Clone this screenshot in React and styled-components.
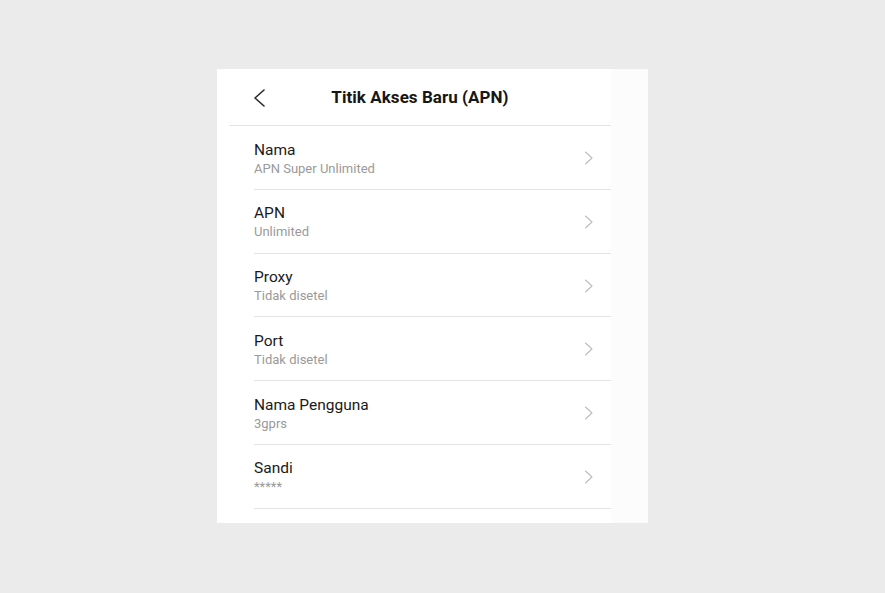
import React from "react";
import styled, { createGlobalStyle } from "styled-components";

const Global = createGlobalStyle`
  html, body { margin: 0; padding: 0; background: #ebebeb; }
  body { font-family: Roboto, "Noto Sans", "Liberation Sans", sans-serif; }
`;

const Page = styled.div`
  width: 885px;
  height: 593px;
  padding: 69px 0 0 217px;
  box-sizing: border-box;
`;

const Card = styled.div`
  width: 431px;
  height: 454px;
  background: #ffffff;
  display: flex;
`;

const Screen = styled.div`
  width: 394px;
  display: flex;
  flex-direction: column;
`;

const SideStrip = styled.div`
  flex: 1;
  background: #fcfcfc;
`;

const Header = styled.header`
  margin-left: 12px;
  height: 56px;
  border-bottom: 1px solid #e3e3e3;
  display: grid;
  grid-template-columns: 1fr auto 1fr;
  align-items: center;
`;

const BackButton = styled.button`
  justify-self: start;
  margin-left: 23px;
  margin-top: 2px;
  padding: 0;
  border: 0;
  background: none;
  width: 14px;
  height: 20px;
  display: flex;
  align-items: center;
  justify-content: center;
`;

const Title = styled.h1`
  margin: 0;
  font-size: 17px;
  font-weight: 700;
  color: #161616;
  letter-spacing: 0.05px;
`;

const List = styled.div`
  margin-left: 37px;
  display: flex;
  flex-direction: column;
`;

const Row = styled.div`
  display: flex;
  align-items: center;
  padding: 13.5px 0 12.3px;
  border-bottom: 1px solid #e3e3e3;
`;

const Texts = styled.div`
  flex: 1;
  display: flex;
  flex-direction: column;
`;

const Label = styled.div`
  font-size: 15.5px;
  line-height: 20px;
  color: #1a1a1a;
`;

const Value = styled.div`
  font-size: 13px;
  line-height: 17px;
  color: #9a9a9a;
`;

const Chevron = styled.svg`
  margin-right: 18px;
  flex: none;
`;

const rows = [
  ["Nama", "APN Super Unlimited"],
  ["APN", "Unlimited"],
  ["Proxy", "Tidak disetel"],
  ["Port", "Tidak disetel"],
  ["Nama Pengguna", "3gprs"],
  ["Sandi", "*****"],
];

export default function App() {
  return (
    <>
      <Global />
      <Page>
        <Card>
          <Screen>
            <Header>
              <BackButton aria-label="Kembali">
                <svg width="12" height="18" viewBox="0 0 12 18">
                  <path d="M11 1 L2 9 L11 17" fill="none" stroke="#2a2a2a" strokeWidth="1.6" strokeLinecap="round" strokeLinejoin="round" />
                </svg>
              </BackButton>
              <Title>Titik Akses Baru (APN)</Title>
              <span />
            </Header>
            <List>
              {rows.map(([l, v]) => (
                <Row key={l}>
                  <Texts>
                    <Label>{l}</Label>
                    <Value>{v}</Value>
                  </Texts>
                  <Chevron width="9" height="14" viewBox="0 0 9 14">
                    <path d="M1.5 1 L8 7 L1.5 13" fill="none" stroke="#bdbdbd" strokeWidth="1.1" strokeLinecap="round" strokeLinejoin="round" />
                  </Chevron>
                </Row>
              ))}
            </List>
          </Screen>
          <SideStrip />
        </Card>
      </Page>
    </>
  );
}
